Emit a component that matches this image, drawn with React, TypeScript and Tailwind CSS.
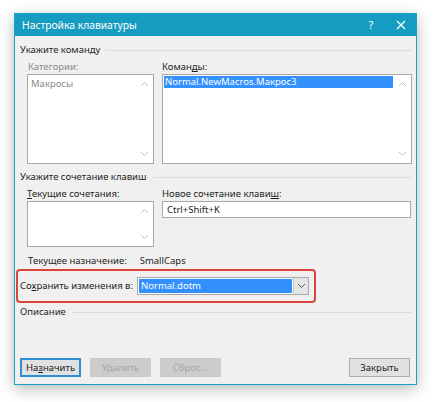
import React from 'react';

const font = { fontFamily: '"Noto Sans", "Open Sans", sans-serif' };

const ChevronUp = () => (
  <svg width="9" height="6" viewBox="0 0 9 6" className="block">
    <path d="M1 5 L4.5 1.5 L8 5" fill="none" stroke="#c2c2c2" strokeWidth="1" />
  </svg>
);

const ChevronDown = ({ color = '#c2c2c2' }: { color?: string }) => (
  <svg width="9" height="6" viewBox="0 0 9 6" className="block">
    <path d="M1 1 L4.5 4.5 L8 1" fill="none" stroke={color} strokeWidth="1" />
  </svg>
);

const SectionTitle = ({ children }: { children: React.ReactNode }) => (
  <div className="flex items-center gap-[6px] h-4 pr-[4px]">
    <span className="text-[#1e1e1e] whitespace-nowrap">{children}</span>
    <div className="flex-1 h-px bg-[#dcdcdc]" />
  </div>
);

const ListBox = ({ children, height }: { children?: React.ReactNode; height: string }) => (
  <div className={`flex bg-white border border-[#a9a9a9] ${height}`}>
    <div className="flex-1 p-[1px] overflow-hidden">{children}</div>
    <div className="w-[17px] flex flex-col items-center justify-between py-[6px]">
      <ChevronUp />
      <ChevronDown />
    </div>
  </div>
);

const Button = ({ children, primary, disabled }: { children: React.ReactNode; primary?: boolean; disabled?: boolean }) => {
  const look = primary
    ? 'border-2 border-[#2d8ed6] bg-[#e1e1e1] text-[#1e1e1e]'
    : disabled
      ? 'border border-[#cbcbcb] bg-[#cccccc] text-[#a4a4a4]'
      : 'border border-[#adadad] bg-[#e1e1e1] text-[#1e1e1e]';
  return (
    <div className={`w-[61px] h-[19px] flex items-center justify-center ${look}`}>{children}</div>
  );
};

export default function App() {
  return (
    <div className="w-[434px] h-[402px] bg-white pt-[13px] pl-[14px] text-[9.5px] leading-4" style={font}>
      <div className="w-[403px] h-[372px] flex flex-col border border-[#1ba1c6] shadow-[0_4px_14px_rgba(0,0,0,0.28)]">
        {/* title bar */}
        <div className="h-[22px] bg-[#169cc0] flex items-center pl-[7px] pr-[10px] text-white">
          <span className="text-[10.3px] flex-1">Настройка клавиатуры</span>
          <span className="text-[11px] w-[16px] text-center mr-[17px]">?</span>
          <svg width="10" height="10" viewBox="0 0 10 10">
            <path d="M1 1 L9 9 M9 1 L1 9" stroke="white" strokeWidth="1.2" />
          </svg>
        </div>

        {/* body */}
        <div className="flex-1 bg-[#f0f0f0] flex flex-col pl-[5px] pt-[6px]">
          <SectionTitle>Укажите команду</SectionTitle>
          <div className="flex gap-[8px] pl-[7px] pr-[4px] mt-[1px]">
            <div className="w-[127px] flex flex-col">
              <span className="text-[#8a8a8a] h-[15px] pl-[1px]">Категории:</span>
              <ListBox height="h-[90px]">
                <span className="text-[#8a8a8a] pl-[2px]">Макросы</span>
              </ListBox>
            </div>
            <div className="flex-1 flex flex-col">
              <span className="text-[#1e1e1e] h-[15px]">
                Коман<span className="underline">д</span>ы:
              </span>
              <ListBox height="h-[90px]">
                <div className="bg-[#3390ff] text-white pl-[1px] h-[12px] leading-[12px]">Normal.NewMacros.Макрос3</div>
              </ListBox>
            </div>
          </div>

          <div className="mt-[5px]">
            <SectionTitle>Укажите сочетание клавиш</SectionTitle>
          </div>
          <div className="flex gap-[8px] pl-[7px] pr-[5px] mt-[1px]">
            <div className="w-[127px] flex flex-col">
              <span className="text-[#1e1e1e] h-[15px]">
                <span className="underline">Т</span>екущие сочетания:
              </span>
              <ListBox height="h-[46px]" />
            </div>
            <div className="flex-1 flex flex-col">
              <span className="text-[#1e1e1e] h-[15px]">
                Новое сочетание клави<span className="underline">ш</span>:
              </span>
              <div className="h-[17px] bg-white border border-[#a9a9a9] flex items-center px-[4px] text-[#1e1e1e]">
                Ctrl+Shift+K
              </div>
            </div>
          </div>

          <div className="pl-[8px] mt-[6px] h-4 text-[#1e1e1e]">
            Текущее назначение:<span className="ml-[13px]">SmallCaps</span>
          </div>

          {/* save target, outlined */}
          <div className="ml-[-4px] w-[300px] h-[34px] border-2 border-[#d9453d] rounded-[4px] flex items-center pl-[2px]">
            <span className="text-[#1e1e1e] w-[117px] whitespace-nowrap">
              Со<span className="underline">х</span>ранить изменения в:
            </span>
            <div className="w-[172px] h-[18px] border border-[#a9a9a9] bg-white flex">
              <div className="flex-1 p-[1px]">
                <div className="h-full bg-[#3390ff] text-white leading-[14px] pl-[2px]">Normal.dotm</div>
              </div>
              <div className="w-[15px] bg-[#e5e5e5] border-l border-[#c8c8c8] flex items-center justify-center">
                <ChevronDown color="#555" />
              </div>
            </div>
          </div>

          <div className="mt-[1px]">
            <SectionTitle>Описание</SectionTitle>
          </div>

          <div className="flex-1" />
          <div className="flex items-center gap-[9px] pr-[6px] mb-[7px]">
            <Button primary>
              На<span className="underline">з</span>начить
            </Button>
            <Button disabled>Удалить</Button>
            <Button disabled>Сброс...</Button>
            <div className="flex-1" />
            <Button>Закрыть</Button>
          </div>
        </div>
      </div>
    </div>
  );
}
